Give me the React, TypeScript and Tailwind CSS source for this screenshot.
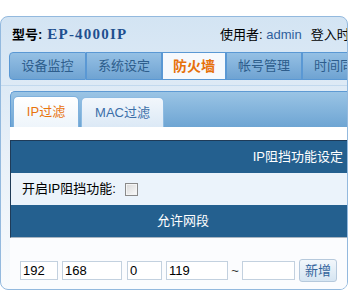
import React from "react";

const tabs = [
  { label: "设备监控", w: "w-[77px]", first: true },
  { label: "系统设定", w: "w-[76px]" },
  { label: "防火墙", w: "w-[64px]", active: true },
  { label: "帐号管理", w: "w-[76px]" },
  { label: "时间同步", w: "w-[76px]" },
];

function Field({ w, value }: { w: string; value: string }) {
  return (
    <input
      readOnly
      defaultValue={value}
      className={`${w} h-[19px] shrink-0 border border-[#c3d1df] bg-white px-[2px] text-[13px] leading-[17px] text-black outline-none font-['Liberation_Sans','Noto_Sans_CJK_SC',sans-serif]`}
    />
  );
}

export default function App() {
  return (
    <div className="w-[350px] h-[302px] overflow-hidden bg-white pt-[16px] text-[13px] text-black font-['Liberation_Sans','Noto_Sans_CJK_SC',sans-serif]">
      <div className="flex h-[274px] w-[348px] flex-col overflow-hidden rounded-[8px] border border-[#93b9de] bg-gradient-to-b from-[#d3e4f3] via-[#e8f0f8] to-[#f8fbfd]">
        {/* header */}
        <div className="flex h-[35px] shrink-0 items-center whitespace-nowrap">
          <div className="flex w-[219px] shrink-0 items-center pl-[11px]">
            <span className="font-bold text-[13px]">型号:</span>
            <span className="ml-[5px] text-[15px] font-bold tracking-[1.2px] text-[#1f4f8f] font-['Liberation_Serif',serif]">
              EP-4000IP
            </span>
          </div>
          <div className="shrink-0 whitespace-nowrap">
            使用者: <span className="text-[#2f5f9c]">admin</span>
            <span className="ml-[9px]">登入时间</span>
          </div>
        </div>
        {/* nav tabs */}
        <div className="flex h-[28px] shrink-0 pl-[8px]">
          {tabs.map((t) => (
            <div
              key={t.label}
              className={`${t.w} -ml-0 flex h-[28px] shrink-0 items-center justify-center whitespace-nowrap border border-[#5a98d4] ${
                t.first ? "rounded-l-[4px]" : ""
              } ${
                t.active
                  ? "bg-[#f6f9fd] text-[14px] font-bold text-[#e6700a]"
                  : "bg-gradient-to-b from-[#95c0e4] to-[#6fa3d2] text-[#2d5d8c]"
              }`}
            >
              {t.label}
            </div>
          ))}
        </div>
        {/* strip */}
        <div className="h-[11px] shrink-0 pt-[5px]">
          <div className="h-[1px] bg-[#c2d9ee]" />
        </div>
        {/* inner box */}
        <div className="ml-[9px] flex flex-1 flex-col bg-[#fbfcfe]">
          <div className="flex h-[36px] shrink-0 items-end gap-[2px] rounded-tl-[5px] border-l border-t border-[#5e9ad3] bg-gradient-to-b from-[#9ac4e5] to-[#6ea5d3] pl-[2px]">
            <div className="flex h-[31px] w-[66px] items-center justify-center rounded-t-[5px] border border-b-0 border-[#7fb1dd] bg-gradient-to-b from-[#ffffff] to-[#eef5fb] text-[13px] text-[#e8730c]">
              IP过滤
            </div>
            <div className="flex h-[30px] w-[83px] items-center justify-center rounded-t-[5px] border border-b-0 border-[#8dbbe2] bg-gradient-to-b from-[#f2f7fc] to-[#dce9f6] text-[13px] text-[#3b6ea8]">
              MAC过滤
            </div>
          </div>
          <div className="h-[13px] shrink-0 bg-white" />
          {/* table */}
          <div className="flex shrink-0 flex-col border-b border-l border-t border-b-[#a9b5c1] border-l-[#1f3b58] border-t-[#1f3b58]">
            <div className="flex h-[32px] items-center justify-end bg-[#24608f] pr-[4px] text-white">
              IP阻挡功能设定
            </div>
            <div className="flex h-[32px] items-center bg-[#ebf3fb] pl-[11px]">
              <span>开启IP阻挡功能:</span>
              <span className="ml-[9px] h-[13px] w-[13px] border border-[#8a8a8a] bg-gradient-to-br from-[#d8d8d8] to-[#fbfbfb] shadow-[inset_0_0_0_1px_#f4f4f4]" />
            </div>
            <div className="flex h-[32px] items-center justify-center bg-[#24608f] pl-[8px] text-white">
              允许网段
            </div>
          </div>
          {/* inputs */}
          <div className="flex items-center pl-[10px] pt-[21px]">
            <Field w="w-[38px]" value="192" />
            <div className="w-[4px]" />
            <Field w="w-[60px]" value="168" />
            <div className="w-[5px]" />
            <Field w="w-[35px]" value="0" />
            <div className="w-[4px]" />
            <Field w="w-[62px]" value="119" />
            <span className="w-[14px] text-center text-[13px] text-[#333]">~</span>
            <Field w="w-[53px]" value="" />
            <button className="ml-[4px] h-[23px] w-[38px] rounded-[3px] border border-[#b6c9dc] bg-gradient-to-b from-[#f2f7fb] to-[#d6e5f2] text-[13px] text-[#33649c]">
              新增
            </button>
          </div>
        </div>
      </div>
    </div>
  );
}
